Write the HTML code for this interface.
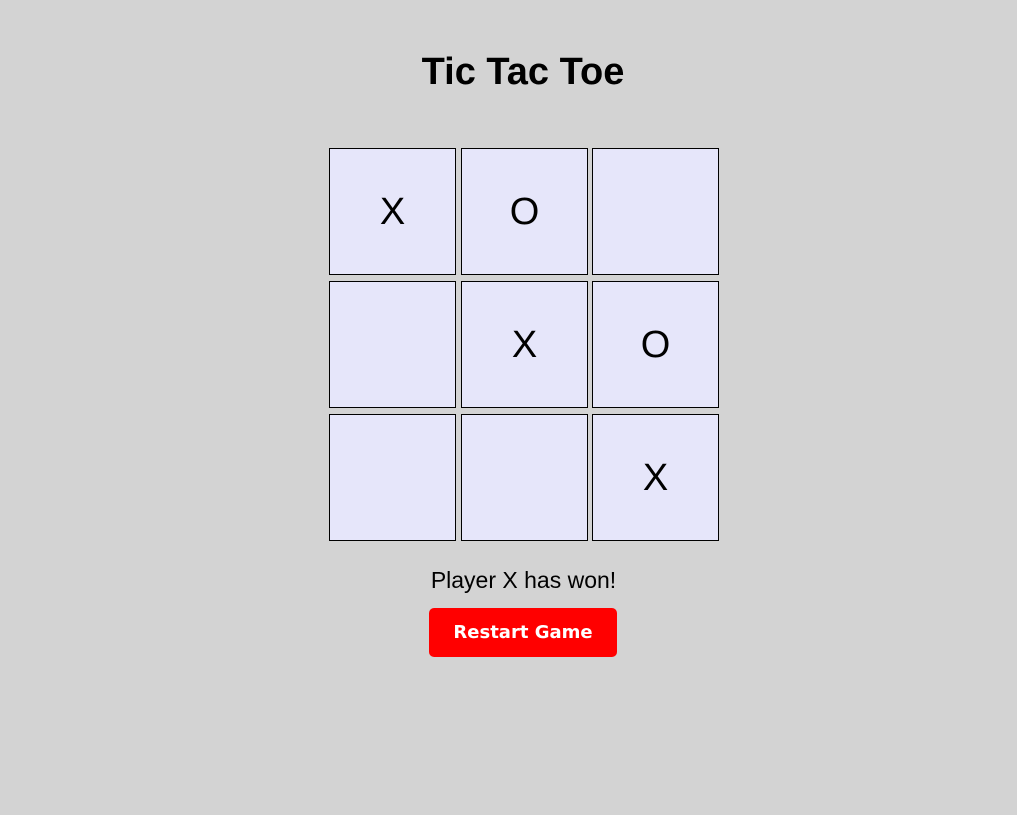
<!DOCTYPE html>
<html><head><style>
body{margin:0;width:1017px;height:815px;background:#d3d3d3;font-family:"Liberation Sans",Arial,sans-serif;position:relative;overflow:hidden}
h1{position:absolute;left:0;width:1046px;top:49px;margin:0;text-align:center;font-size:38px;font-weight:bold;line-height:46px}
.c{position:absolute;width:125px;height:125px;border:1px solid #000;background:#e6e6fa;font-size:38px;line-height:127px;text-align:center}
.s{position:absolute;left:329px;width:389px;top:566px;text-align:center;font-size:23px;line-height:28px}
.b{position:absolute;left:429px;top:608px;width:188px;height:49px;background:#f00;border-radius:5px;color:#fff;font-family:"DejaVu Sans",Verdana,sans-serif;font-weight:bold;font-size:18px;line-height:50px;text-align:center}
</style></head><body>
<h1>Tic Tac Toe</h1>
<div class="c" style="left:329px;top:148px">X</div>
<div class="c" style="left:461px;top:148px">O</div>
<div class="c" style="left:592px;top:148px"></div>
<div class="c" style="left:329px;top:281px"></div>
<div class="c" style="left:461px;top:281px">X</div>
<div class="c" style="left:592px;top:281px">O</div>
<div class="c" style="left:329px;top:414px"></div>
<div class="c" style="left:461px;top:414px"></div>
<div class="c" style="left:592px;top:414px">X</div>
<div class="s">Player X has won!</div>
<div class="b">Restart Game</div>
</body></html>
